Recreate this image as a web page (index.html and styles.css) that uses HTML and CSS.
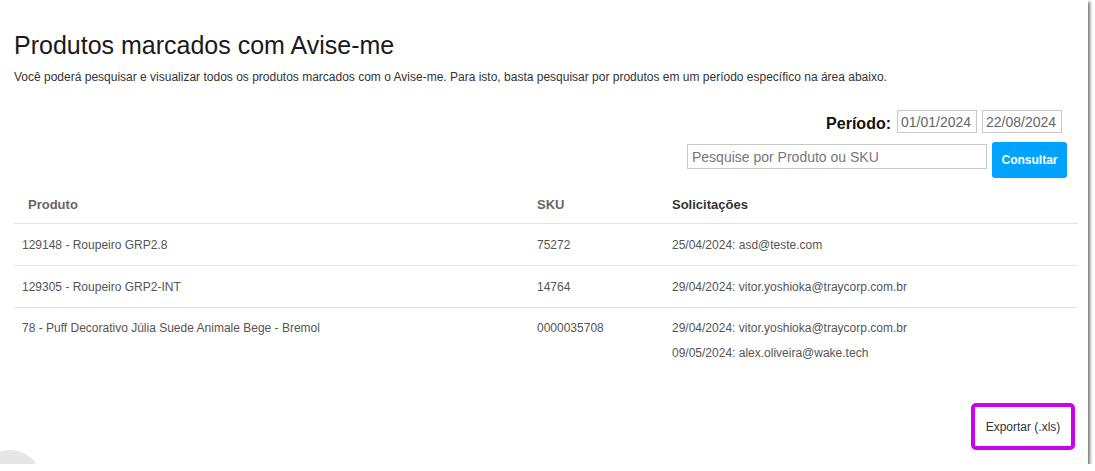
FILE: index.html
```html
<!DOCTYPE html>
<html lang="pt-BR">
<head>
<meta charset="utf-8">
<link rel="stylesheet" href="styles.css">
</head>
<body>
<div class="page">
  <h1 class="title">Produtos marcados com Avise-me</h1>
  <p class="subtitle">Você poderá pesquisar e visualizar todos os produtos marcados com o Avise-me. Para isto, basta pesquisar por produtos em um período específico na área abaixo.</p>
  <div class="filters">
    <div class="period">
      <span class="period-label">Período:</span>
      <input class="date" type="text" value="01/01/2024">
      <input class="date" type="text" value="22/08/2024">
    </div>
    <div class="search">
      <input class="search-input" type="text" placeholder="Pesquise por Produto ou SKU">
      <button class="btn-consultar">Consultar</button>
    </div>
  </div>
  <table class="grid">
    <thead>
      <tr><th class="c-prod">Produto</th><th class="c-sku">SKU</th><th class="c-sol">Solicitações</th></tr>
    </thead>
    <tbody>
      <tr><td class="c-prod">129148 - Roupeiro GRP2.8</td><td class="c-sku">75272</td><td class="c-sol"><div>25/04/2024: asd@teste.com</div></td></tr>
      <tr><td class="c-prod">129305 - Roupeiro GRP2-INT</td><td class="c-sku">14764</td><td class="c-sol"><div>29/04/2024: vitor.yoshioka@traycorp.com.br</div></td></tr>
      <tr class="last"><td class="c-prod">78 - Puff Decorativo Júlia Suede Animale Bege - Bremol</td><td class="c-sku">0000035708</td><td class="c-sol"><div>29/04/2024: vitor.yoshioka@traycorp.com.br</div><div class="second">09/05/2024: alex.oliveira@wake.tech</div></td></tr>
    </tbody>
  </table>
  <div class="footer">
    <button class="btn-export">Exportar (.xls)</button>
  </div>
  <div class="corner"></div>
</div>
</body>
</html>
```
FILE: styles.css
```css
html, body {
  margin: 0;
  padding: 0;
  background: #fff;
}
body {
  font-family: "Liberation Sans", Arial, sans-serif;
  color: #333;
}
.page {
  position: relative;
  width: 1088px;
  height: 464px;
  box-sizing: border-box;
  padding: 28px 10px 0 14px;
  background: #fff;
  box-shadow: 2px 2px 3px rgba(0,0,0,0.55);
  overflow: hidden;
}
.title {
  margin: 0;
  font-size: 25px;
  font-weight: normal;
  color: #1a1a1a;
  line-height: 34px;
}
.subtitle {
  margin: 8px 0 0;
  font-size: 12px;
  color: #333;
  line-height: 14px;
}
.filters {
  display: flex;
  flex-direction: column;
  align-items: flex-end;
  margin-top: 26px;
  padding-right: 11px;
}
.period {
  display: flex;
  align-items: center;
  gap: 5px;
  margin-right: 5px;
}
.period-label {
  font-size: 16px;
  font-weight: bold;
  color: #111;
  margin-right: 1px;
  padding-top: 5px;
}
.date {
  width: 80px;
  height: 23px;
  box-sizing: border-box;
  border: 1px solid #c8c8c8;
  padding: 0 3px;
  font-family: "Liberation Sans", Arial, sans-serif;
  font-size: 14px;
  color: #666;
  outline: none;
}
.search {
  display: flex;
  align-items: flex-start;
  gap: 5px;
  margin-top: 9px;
}
.search-input {
  width: 300px;
  height: 25px;
  box-sizing: border-box;
  border: 1px solid #c8c8c8;
  padding: 0 4px;
  margin-top: 2px;
  font-family: "Liberation Sans", Arial, sans-serif;
  font-size: 14px;
  color: #666;
  outline: none;
}
.search-input::placeholder {
  color: #777;
}
.btn-consultar {
  width: 75px;
  height: 36px;
  border: none;
  border-radius: 3px;
  background: #00a3ff;
  color: #fff;
  font-family: "Liberation Sans", Arial, sans-serif;
  font-size: 12px;
  font-weight: bold;
  padding: 0;
}
.grid {
  width: 1064px;
  margin-top: 8px;
  border-collapse: collapse;
  font-size: 12px;
  color: #555;
}
.grid th {
  text-align: left;
  font-size: 13px;
  font-weight: bold;
  color: #666;
  height: 37px;
  padding: 0;
  border-bottom: 1px solid #e3e3e3;
  vertical-align: middle;
}
.grid th.c-prod { padding-left: 14px; width: 509px; }
.grid th.c-sku { width: 135px; }
.grid th.c-sol { color: #333; }
.grid td {
  padding: 0;
  height: 41px;
  border-bottom: 1px solid #e3e3e3;
  vertical-align: middle;
}
.grid td.c-prod { padding-left: 8px; width: 515px; }
.grid td.c-sku { width: 135px; }
.grid tr.last td {
  border-bottom: none;
  vertical-align: top;
  padding-top: 13px;
  height: auto;
}
.grid .second {
  margin-top: 11px;
}
.footer {
  display: flex;
  justify-content: flex-end;
  margin-top: 43px;
  padding-right: 3px;
}
.btn-export {
  width: 104px;
  height: 47px;
  box-sizing: border-box;
  border: 4px solid #cc00ee;
  border-radius: 5px;
  background: #fff;
  font-family: "Liberation Sans", Arial, sans-serif;
  font-size: 12px;
  color: #333;
  padding: 0;
}
.corner {
  position: absolute;
  left: -20px;
  bottom: -40px;
  width: 60px;
  height: 54px;
  border-radius: 50%;
  background: #e6e6e6;
}
```
